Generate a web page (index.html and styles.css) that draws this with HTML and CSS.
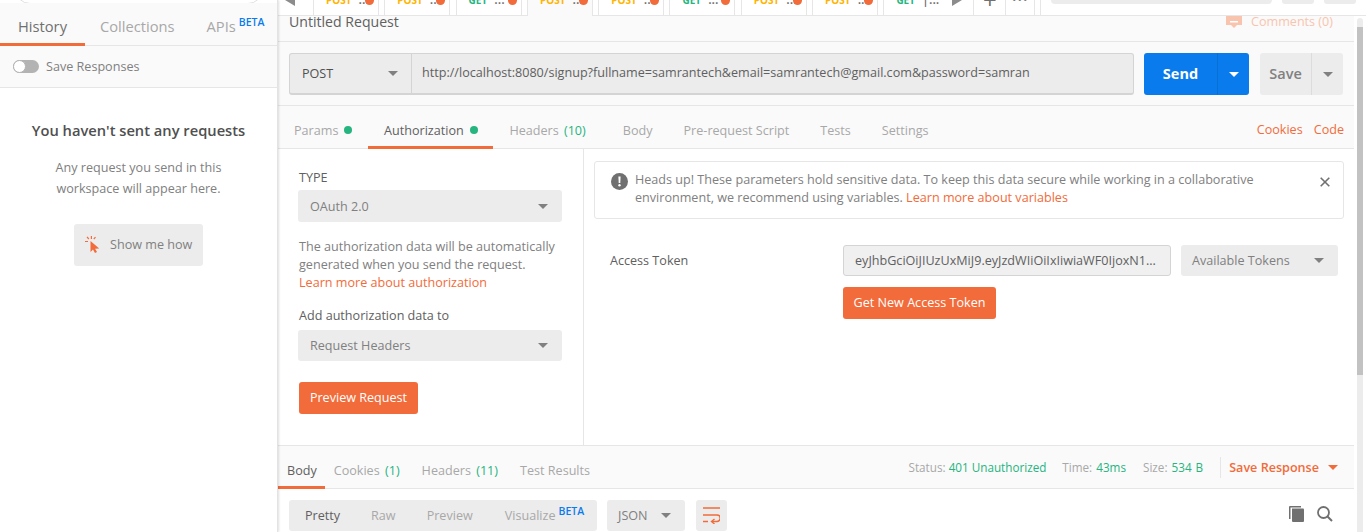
FILE: index.html
```html
<!DOCTYPE html>
<html>
	<head>
		<meta charset="utf-8">
		<title>Untitled Request</title>
		<link rel="stylesheet" href="styles.css">
	</head>
	<body>
		<div id="app">
			<div id="sidebar">
				<div class="sidebarSearchClip"><div class="sidebarSearch"></div></div>
				<div class="sidebarTabs">
					<span class="sideTab sideTabActive">History</span>
					<span class="sideTab sideTabCollections">Collections</span>
					<span class="sideTab sideTabApis">APIs<sup class="beta">BETA</sup></span>
				</div>
				<div class="saveRow">
					<span class="toggle"><span class="knob"></span></span>
					<span>Save Responses</span>
				</div>
				<div class="emptyState">
					<h2>You haven't sent any requests</h2>
					<p>Any request you send in this<br>workspace will appear here.</p>
					<div class="showMe">
						<svg width="16" height="17" viewBox="0 0 16 17"><path d="M5.500 5v11l2.500-2.500 2 3.500 2-1-1.900-3.300 4.100-.2z" fill="#f26b3a"/><path d="M0 5.500h3M2 .8l1.800 2.200M6.400 0v3M10.500 1.200L8.800 3" stroke="#f26b3a" stroke-width="1.200" fill="none"/></svg>
						<span>Show me how</span>
					</div>
				</div>
			</div>
			<div id="main">
				<div class="tabStrip">
					<span class="tabArrow tabArrowLeft"></span>
					<div class="reqTab"><b class="post">POST</b><i>...</i><em></em></div>
					<div class="reqTab"><b class="post">POST</b><i>...</i><em></em></div>
					<div class="reqTab"><b class="get">GET</b><i>...</i><em></em></div>
					<div class="reqTab reqTabActive"><b class="post">POST</b><i>...</i><em></em></div>
					<div class="reqTab"><b class="post">POST</b><i>...</i><em></em></div>
					<div class="reqTab"><b class="get">GET</b><i>...</i><em></em></div>
					<div class="reqTab"><b class="post">POST</b><i>...</i><em></em></div>
					<div class="reqTab"><b class="post">POST</b><i>...</i><em></em></div>
					<div class="reqTab reqTabLast"><b class="get">GET</b><i>|...</i></div>
					<span class="tabArrow tabArrowRight"></span>
					<span class="tabTool tabPlus">+</span>
					<span class="tabTool tabMore">•••</span>
					<span class="tabGap"></span>
					<span class="topField"></span>
					<span class="topBtn"></span>
					<span class="topBtn"></span>
				</div>
				<div class="workArea">
					<div class="builder">
						<div class="nameRow">
							<span class="reqName">Untitled Request</span>
							<span class="comments">
								<svg width="16" height="13" viewBox="0 0 16 13"><path d="M0 0h16v10h-5l-3 3-3-3H0z" fill="#f9c4ad"/><path d="M4 6h8v1.500H4z" fill="#fff"/></svg>
								Comments (0)
							</span>
						</div>
						<div class="urlRow">
							<div class="urlBox">
								<div class="method"><span>POST</span><span class="caret"></span></div>
								<div class="urlText">http://localhost:8080/signup?fullname=samrantech&amp;email=samrantech@gmail.com&amp;password=samran</div>
							</div>
							<div class="send"><span class="sendLabel">Send</span><span class="sendCaret"><span class="caret caretWhite"></span></span></div>
							<div class="save"><span class="saveLabel">Save</span><span class="saveCaret"><span class="caret"></span></span></div>
						</div>
						<div class="reqTabs">
							<span class="rt rtParams">Params<em class="dot"></em></span>
							<span class="rt rtAuth">Authorization<em class="dot"></em></span>
							<span class="rt rtHeaders">Headers <span class="green">(10)</span></span>
							<span class="rt rtBody">Body</span>
							<span class="rt rtPre">Pre-request Script</span>
							<span class="rt rtTests">Tests</span>
							<span class="rt rtSettings">Settings</span>
							<span class="spacer"></span>
							<span class="link">Cookies</span>
							<span class="link linkCode">Code</span>
						</div>
						<div class="authArea">
							<div class="authLeft">
								<div class="typeLabel">TYPE</div>
								<div class="select"><span>OAuth 2.0</span><span class="caret"></span></div>
								<p class="authHelp">The authorization data will be automatically generated when you send the request.<br><span class="link">Learn more about authorization</span></p>
								<div class="addLabel">Add authorization data to</div>
								<div class="select selectShort"><span>Request Headers</span><span class="caret"></span></div>
								<div class="orangeBtn previewBtn">Preview Request</div>
							</div>
							<div class="authRight">
								<div class="alert">
									<svg class="alertIcon" width="17" height="17" viewBox="0 0 17 17"><circle cx="8.500" cy="8.500" r="8.500" fill="#707070"/><path d="M7.400 3.500h2.200l-.3 6.500H7.700z" fill="#fff"/><circle cx="8.500" cy="12.300" r="1.200" fill="#fff"/></svg>
									<div class="alertText">Heads up! These parameters hold sensitive data. To keep this data secure while working in a collaborative environment, we recommend using variables. <span class="link">Learn more about variables</span></div>
									<svg class="alertClose" width="10" height="10" viewBox="0 0 10 10"><path d="M.7.700l8.600 8.600M9.300.700L.7 9.300" stroke="#707070" stroke-width="1.600"/></svg>
								</div>
								<div class="tokenRow">
									<span class="tokenLabel">Access Token</span>
									<div class="tokenCol">
										<div class="tokenFields">
											<div class="tokenInput">eyJhbGciOiJIUzUxMiJ9.eyJzdWIiOiIxIiwiaWF0IjoxN1...</div>
											<div class="tokenSelect"><span>Available Tokens</span><span class="caret"></span></div>
										</div>
										<div class="orangeBtn tokenBtn">Get New Access Token</div>
									</div>
								</div>
							</div>
						</div>
						<div class="respBar">
							<span class="respTab respTabActive">Body</span>
							<span class="respTab respCookies">Cookies <span class="green">(1)</span></span>
							<span class="respTab respHeaders">Headers <span class="green">(11)</span></span>
							<span class="respTab respTests">Test Results</span>
							<span class="spacer"></span>
							<span class="stat">Status: <span class="green">401 Unauthorized</span></span>
							<span class="stat statWide">Time: <span class="green">43ms</span></span>
							<span class="stat statWide statSize">Size: <span class="green">534 B</span></span>
							<span class="saveResp">Save Response<span class="caret caretOrange"></span></span>
						</div>
						<div class="bodyBar">
							<div class="formats">
								<span class="fmt fmtActive">Pretty</span>
								<span class="fmt">Raw</span>
								<span class="fmt">Preview</span>
								<span class="fmt fmtLast">Visualize<sup class="beta">BETA</sup></span>
							</div>
							<div class="jsonSelect"><span>JSON</span><span class="caret"></span></div>
							<div class="wrapBtn">
								<svg width="17" height="17" viewBox="0 0 17 17"><path d="M0 1h17M0 8h14a2.800 2.800 0 0 1 0 6.500H9M0 14.500h5" stroke="#f26b3a" stroke-width="1.600" fill="none"/><path d="M11.500 12l-3 2.500 3 2.500" stroke="#f26b3a" stroke-width="1.400" fill="none"/></svg>
							</div>
							<span class="spacer"></span>
							<svg class="copyIcon" width="16" height="16" viewBox="0 0 16 16"><path d="M3 2.500h11a1 1 0 0 1 1 1V15a1 1 0 0 1-1 1H4a1 1 0 0 1-1-1z" fill="#707070"/><path d="M1 0h11v1.500H1.500V13H0V1a1 1 0 0 1 1-1z" fill="#707070"/></svg>
							<svg class="searchIcon" width="16" height="16" viewBox="0 0 16 16"><circle cx="6.500" cy="6.500" r="5.500" stroke="#707070" stroke-width="1.800" fill="none"/><path d="M10.500 10.500L15 15" stroke="#707070" stroke-width="2"/></svg>
						</div>
					</div>
					<div id="scrollbar"><div class="thumb"></div></div>
				</div>
			</div>
		</div>
	</body>
</html>
```

FILE: styles.css
```css
html, body {
	padding: 0;
	margin: 0;
	height: 100%;
	overflow: hidden;
	background: #fff;
	}

body {
	font: 12.600px "Open Sans", sans-serif;
	color: #808080;
	}

p, h2 {
	margin: 0;
	}

#app {
	display: flex;
	height: 532px;
	overflow: hidden;
	}

#sidebar {
	width: 277px;
	flex: none;
	border-right: 1px solid #e3e3e3;
	box-shadow: 1px 0 2px rgba(0, 0, 0, .12);
	position: relative;
	z-index: 2;
	background: #fff;
	}

.sidebarSearchClip {
	height: 3px;
	overflow: hidden;
	}

.sidebarSearch {
	height: 30px;
	margin: -28px 14px 0 15px;
	border: 1px solid #e0e0e0;
	border-radius: 15px;
	}

.sidebarTabs {
	height: 42px;
	display: flex;
	align-items: stretch;
	border-bottom: 1px solid #e6e6e6;
	background: #fafafa;
	font-size: 14.700px;
	color: #a8a8a8;
	}

.sideTab {
	padding-top: 13px;
	white-space: nowrap;
	box-sizing: border-box;
	line-height: 20px;
	}

.sideTabActive {
	width: 85px;
	height: 43px;
	text-align: center;
	color: #707070;
	border-bottom: 3px solid #f26b3a;
	}

.sideTabCollections {
	margin-left: 15px;
	}

.sideTabApis {
	margin-left: 32px;
	}

.beta {
	font-size: 10.500px;
	font-weight: 600;
	color: #097bed;
	line-height: 10px;
	vertical-align: 6px;
	margin-left: 3px;
	}

.saveRow {
	height: 41px;
	display: flex;
	align-items: center;
	gap: 7px;
	padding-left: 13px;
	background: #fafafa;
	border-bottom: 1px solid #e6e6e6;
	}

.toggle {
	width: 26px;
	height: 13px;
	border-radius: 7px;
	background: #b3b3b3;
	position: relative;
	display: block;
	}

.knob {
	position: absolute;
	left: 0;
	top: 0;
	width: 11px;
	height: 11px;
	border: 1px solid #b3b3b3;
	border-radius: 50%;
	background: #fff;
	}

.emptyState {
	text-align: center;
	padding-top: 32px;
	}

.emptyState h2 {
	font-size: 14.700px;
	font-weight: 600;
	line-height: 20px;
	color: #505050;
	}

.emptyState p {
	margin-top: 17px;
	line-height: 21px;
	}

.showMe {
	width: 129px;
	height: 42px;
	margin: 25px auto 0 auto;
	border-radius: 3px;
	background: #ececec;
	display: flex;
	align-items: center;
	gap: 9px;
	padding: 0 0 2px 11px;
	box-sizing: border-box;
	}

#main {
	flex: 1;
	min-width: 0;
	display: flex;
	flex-direction: column;
	}

.tabStrip {
	height: 15px;
	padding-bottom: 1px;
	flex: none;
	display: flex;
	align-items: flex-end;
	overflow: hidden;
	background: #fff;
	box-shadow: inset 0 -1px #e6e6e6;
	}

.tabArrow {
	width: 0;
	height: 0;
	flex: none;
	align-self: flex-start;
	border-top: 6px solid transparent;
	border-bottom: 6px solid transparent;
	margin-top: -6px;
	}

.tabArrowLeft {
	border-right: 10px solid #8c8c8c;
	margin-left: 7px;
	margin-right: 18px;
	}

.tabArrowRight {
	border-left: 10px solid #8c8c8c;
	margin-left: 7px;
	margin-right: 11px;
	}

.reqTab {
	width: 66px;
	height: 30px;
	flex: none;
	box-sizing: border-box;
	margin-right: 5.300px;
	padding: 7px 0 0 12px;
	border: 1px solid #e6e6e6;
	border-bottom: 0;
	display: flex;
	align-items: baseline;
	position: relative;
	background: #fff;
	font-size: 10px;
	line-height: 14px;
	}

.reqTabLast {
	width: 62px;
	margin-right: 0;
	border-right: 0;
	}

.reqTab b {
	font-weight: 700;
	}

.reqTab i {
	font-style: normal;
	color: #707070;
	font-size: 12.600px;
	font-weight: 600;
	margin-left: 7px;
	}

.reqTab em {
	position: absolute;
	right: 4px;
	bottom: 10px;
	width: 9px;
	height: 9px;
	border-radius: 50%;
	background: #f26b3a;
	}

.reqTabActive {
	background: #fafafa;
	height: 31px;
	margin-bottom: -1px;
	}

.reqTabActive em {
	bottom: 11px;
	}

.post {
	color: #ffb400;
	}

.get {
	color: #26b47f;
	}

.tabTool {
	height: 30px;
	flex: none;
	box-sizing: border-box;
	border-left: 1px solid #e6e6e6;
	text-align: center;
	color: #707070;
	line-height: 30px;
	overflow: hidden;
	}

.tabPlus {
	width: 32px;
	font-size: 24px;
	}

.tabMore {
	width: 30px;
	font-size: 12px;
	letter-spacing: 1px;
	border-right: 1px solid #e6e6e6;
	}

.tabGap {
	width: 6px;
	height: 30px;
	flex: none;
	box-sizing: border-box;
	border-right: 1px solid #e6e6e6;
	margin-right: 10px;
	}

.topField {
	width: 221px;
	height: 4px;
	flex: none;
	align-self: flex-start;
	background: #ececec;
	border-radius: 0 0 4px 4px;
	margin-right: 10px;
	}

.topBtn {
	width: 32px;
	height: 4px;
	flex: none;
	align-self: flex-start;
	background: #ececec;
	border-radius: 0 0 3px 3px;
	margin-right: 10px;
	}

.workArea {
	flex: 1;
	min-height: 0;
	display: flex;
	}

.builder {
	flex: 1;
	min-width: 0;
	display: flex;
	flex-direction: column;
	background: #fafafa;
	}

.nameRow {
	height: 25px;
	flex: none;
	box-sizing: content-box;
	display: flex;
	align-items: flex-start;
	justify-content: space-between;
	padding: 0 21px 0 11px;
	border-bottom: 1px solid #e6e6e6;
	overflow: hidden;
	}

.reqName {
	font-size: 14.100px;
	color: #606060;
	line-height: 14px;
	margin-top: -1px;
	}

.comments {
	display: flex;
	align-items: center;
	gap: 9px;
	color: #f9c4ad;
	line-height: 12px;
	height: 13px;
	margin-top: -1px;
	}

.urlRow {
	height: 64px;
	flex: none;
	display: flex;
	align-items: flex-start;
	padding: 11px 11px 0 11px;
	box-sizing: border-box;
	border-bottom: 1px solid #e6e6e6;
	}

.urlBox {
	width: 845px;
	height: 42px;
	flex: none;
	box-sizing: border-box;
	display: flex;
	background: #ececec;
	border: 1px solid #d4d4d4;
	border-bottom-width: 2px;
	border-radius: 3px;
	color: #606060;
	}

.method {
	width: 122px;
	flex: none;
	box-sizing: border-box;
	display: flex;
	align-items: center;
	justify-content: space-between;
	padding: 0 13px 0 12px;
	border-right: 1px solid #d4d4d4;
	color: #505050;
	}

.urlText {
	padding: 0 10px;
	line-height: 38px;
	white-space: nowrap;
	overflow: hidden;
	}

.caret {
	display: block;
	flex: none;
	width: 0;
	height: 0;
	border-left: 5px solid transparent;
	border-right: 5px solid transparent;
	border-top: 5px solid #808080;
	}

.caretWhite {
	border-top-color: #fff;
	}

.caretOrange {
	border-top-color: #f26b3a;
	margin-left: 9px;
	}

.send {
	width: 105px;
	height: 42px;
	flex: none;
	margin-left: 10px;
	display: flex;
	border-radius: 3px;
	background: #097bed;
	color: #fff;
	font-size: 14.500px;
	font-weight: 700;
	}

.sendLabel {
	width: 73px;
	text-align: center;
	line-height: 42px;
	border-right: 1px solid #0a6fd4;
	}

.sendCaret, .saveCaret {
	flex: 1;
	display: flex;
	align-items: center;
	justify-content: center;
	}

.save {
	width: 83px;
	height: 42px;
	flex: none;
	margin-left: 11px;
	display: flex;
	border-radius: 3px;
	background: #ececec;
	font-size: 14.500px;
	font-weight: 600;
	}

.saveLabel {
	width: 51px;
	text-align: center;
	line-height: 42px;
	border-right: 1px solid #dcdcdc;
	}

.reqTabs {
	height: 42px;
	flex: none;
	display: flex;
	align-items: stretch;
	padding: 0 10px 0 16px;
	border-bottom: 1px solid #e6e6e6;
	color: #a8a8a8;
	}

.rt {
	display: flex;
	align-items: center;
	white-space: pre;
	padding-top: 6px;
	box-sizing: border-box;
	}

.rtAuth {
	width: 125px;
	height: 43px;
	justify-content: center;
	margin-left: 16px;
	padding-top: 8px;
	color: #606060;
	border-bottom: 3px solid #f26b3a;
	}

.rtHeaders {
	margin-left: 16px;
	word-spacing: 2px;
	}

.rtBody {
	margin-left: 37px;
	}

.rtPre, .rtTests, .rtSettings {
	margin-left: 31px;
	}

.dot {
	width: 8px;
	height: 8px;
	border-radius: 50%;
	background: #26b47f;
	margin-left: 6px;
	}

.green {
	color: #26b47f;
	}

.spacer {
	flex: 1;
	}

.link {
	color: #f26b3a;
	}

.reqTabs .link {
	line-height: 42px;
	padding-top: 3px;
	}

.linkCode {
	margin-left: 11px;
	}

.authArea {
	height: 296px;
	flex: none;
	display: flex;
	background: #fff;
	}

.authLeft {
	width: 306px;
	flex: none;
	box-sizing: border-box;
	padding: 20px 21px 0 21px;
	border-right: 1px solid #e6e6e6;
	}

.typeLabel {
	line-height: 17px;
	color: #606060;
	margin-bottom: 4px;
	}

.select {
	height: 32px;
	border-radius: 3px;
	background: #ececec;
	display: flex;
	align-items: center;
	justify-content: space-between;
	padding: 0 14px 0 12px;
	margin-left: -1px;
	}

.selectShort {
	height: 31px;
	}

.authHelp {
	margin-top: 16px;
	line-height: 18px;
	}

.addLabel {
	margin-top: 15px;
	line-height: 18px;
	color: #606060;
	margin-bottom: 5px;
	}

.orangeBtn {
	height: 32px;
	border-radius: 3px;
	background: #f26b3a;
	color: #fff;
	line-height: 31px;
	text-align: center;
	}

.previewBtn {
	width: 119px;
	margin-top: 21px;
	}

.authRight {
	flex: 1;
	padding: 12px 10px 0 10px;
	min-width: 0;
	}

.alert {
	height: 58px;
	box-sizing: border-box;
	border: 1px solid #e6e6e6;
	border-radius: 3px;
	display: flex;
	padding: 9px 13px 0 16px;
	}

.alertIcon {
	flex: none;
	margin: 2px 7px 0 0;
	}

.alertText {
	flex: 1;
	line-height: 18px;
	padding-right: 40px;
	}

.alertClose {
	flex: none;
	margin-top: 6px;
	}

.tokenRow {
	display: flex;
	margin-top: 26px;
	padding-left: 16px;
	}

.tokenLabel {
	width: 233px;
	flex: none;
	line-height: 32px;
	color: #606060;
	}

.tokenFields {
	display: flex;
	gap: 10px;
	}

.tokenInput {
	width: 328px;
	height: 31px;
	box-sizing: border-box;
	border: 1px solid #d4d4d4;
	border-radius: 3px;
	background: #f0f0f0;
	padding: 0 11px;
	line-height: 29px;
	color: #606060;
	white-space: nowrap;
	overflow: hidden;
	}

.tokenSelect {
	width: 157px;
	height: 31px;
	box-sizing: border-box;
	border-radius: 3px;
	background: #ececec;
	display: flex;
	align-items: center;
	justify-content: space-between;
	padding: 0 14px 0 11px;
	}

.tokenBtn {
	width: 153px;
	margin-top: 11px;
	}

.respBar {
	height: 42px;
	flex: none;
	display: flex;
	align-items: stretch;
	padding: 0 16px 0 9px;
	border-top: 1px solid #e6e6e6;
	border-bottom: 1px solid #e6e6e6;
	color: #a8a8a8;
	}

.respTab {
	display: flex;
	align-items: center;
	white-space: pre;
	padding-top: 7px;
	box-sizing: border-box;
	word-spacing: 2px;
	}

.respTabActive {
	color: #606060;
	border-bottom: 3px solid #f26b3a;
	margin-left: -9px;
	padding: 9px 8px 0 9px;
	height: 43px;
	}

.respCookies {
	margin-left: 9px;
	}

.respHeaders, .respTests {
	margin-left: 22px;
	}

.respTests {
	word-spacing: 0;
	}

.stat {
	display: flex;
	align-items: center;
	white-space: pre;
	font-size: 11.700px;
	margin-left: 16px;
	}

.statWide {
	word-spacing: 1px;
	}

.statSize {
	margin-left: 17px;
	}

.saveResp {
	display: flex;
	align-items: center;
	margin-left: 17px;
	padding-left: 9px;
	color: #f26b3a;
	font-weight: 600;
	white-space: nowrap;
	position: relative;
	}

.saveResp:before {
	content: "";
	position: absolute;
	left: 0;
	top: 11px;
	height: 21px;
	width: 1px;
	background: #e6e6e6;
	}

.bodyBar {
	flex: 1;
	display: flex;
	align-items: flex-start;
	padding: 11px 21px 0 11px;
	background: #fff;
	}

.formats {
	width: 308px;
	height: 31px;
	flex: none;
	display: flex;
	align-items: center;
	border-radius: 3px;
	background: #ececec;
	color: #a8a8a8;
	padding-left: 16px;
	box-sizing: border-box;
	}

.fmt {
	margin-right: 31px;
	}

.fmtLast {
	margin: -1px 0 0 1px;
	white-space: nowrap;
	}

.fmtLast .beta {
	vertical-align: 5px;
	}

.fmtActive {
	color: #606060;
	}

.jsonSelect {
	width: 78px;
	height: 31px;
	flex: none;
	box-sizing: border-box;
	margin-left: 10px;
	border-radius: 3px;
	background: #ececec;
	display: flex;
	align-items: center;
	justify-content: space-between;
	padding: 0 14px 0 11px;
	}

.wrapBtn {
	width: 31px;
	height: 31px;
	flex: none;
	margin-left: 11px;
	border-radius: 3px;
	background: #ececec;
	display: flex;
	align-items: center;
	justify-content: center;
	}

.copyIcon {
	margin-top: 6px;
	}

.searchIcon {
	margin: 6px 0 0 12px;
	}

#scrollbar {
	width: 12px;
	flex: none;
	box-sizing: border-box;
	background: #fff;
	margin-top: 2px;
	padding: 0 3px;
	}

#scrollbar:before {
	content: "";
	display: block;
	height: 9px;
	background: #ececec;
	border-radius: 3px 3px 0 0;
	}

.thumb {
	height: 100%;
	background: linear-gradient(#c2c2c2 348px, #ececec 348px);
	}
```
